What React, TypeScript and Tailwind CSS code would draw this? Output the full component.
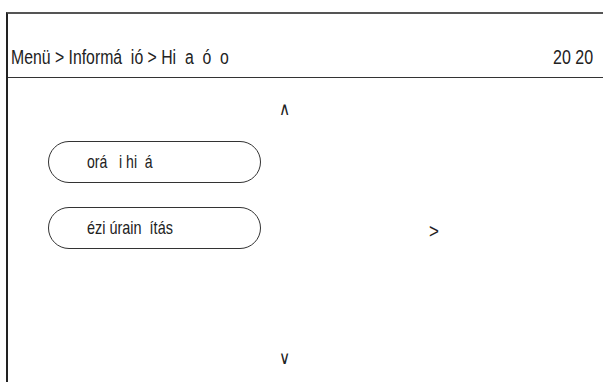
export default function App() {
  const font = { fontFamily: '"Liberation Sans", Arial, sans-serif' };
  return (
    <div className="w-[603px] h-[382px] bg-white relative overflow-hidden text-[#222]" style={font}>
      <div className="mt-[12px] ml-[6px] h-[370px] border-l-2 border-t-2 border-l-[#222] border-t-[#555] flex flex-col">
        <div className="h-[64px] border-b border-[#333] flex items-center justify-between pl-[3px] pr-[10px] pt-[22px]">
          <span className="inline-block origin-left scale-x-[0.79] whitespace-nowrap text-[20px]">Menü &gt; Informá&nbsp;&nbsp;ió &gt; Hi&nbsp;&nbsp;a&nbsp;&nbsp;ó&nbsp;&nbsp;o</span>
          <span className="inline-block origin-right scale-x-[0.8] whitespace-nowrap text-[20px]">20 20</span>
        </div>
        <div className="relative flex-1">
          <div className="absolute left-[270px] top-[18px] text-[18px] inline-block scale-x-[0.85]">&#x2227;</div>
          <div className="pt-[63px] pl-[40px] flex flex-col gap-[24px]">
            <div className="w-[213px] h-[42px] rounded-full border border-[#333] flex items-center pl-[38px]">
              <span className="inline-block origin-left scale-x-[0.74] whitespace-nowrap text-[19px]">orá&nbsp;&nbsp;&nbsp;i hi&nbsp;&nbsp;á</span>
            </div>
            <div className="w-[213px] h-[42px] rounded-full border border-[#333] flex items-center pl-[38px]">
              <span className="inline-block origin-left scale-x-[0.76] whitespace-nowrap text-[19px]">ézi úrain&nbsp;&nbsp;ítás</span>
            </div>
          </div>
          <div className="absolute left-[420px] top-[138px] text-[20px] inline-block scale-x-[0.85]">&gt;</div>
          <div className="absolute left-[270px] top-[267px] text-[18px] inline-block scale-x-[0.85]">&#x2228;</div>
        </div>
      </div>
    </div>
  );
}
